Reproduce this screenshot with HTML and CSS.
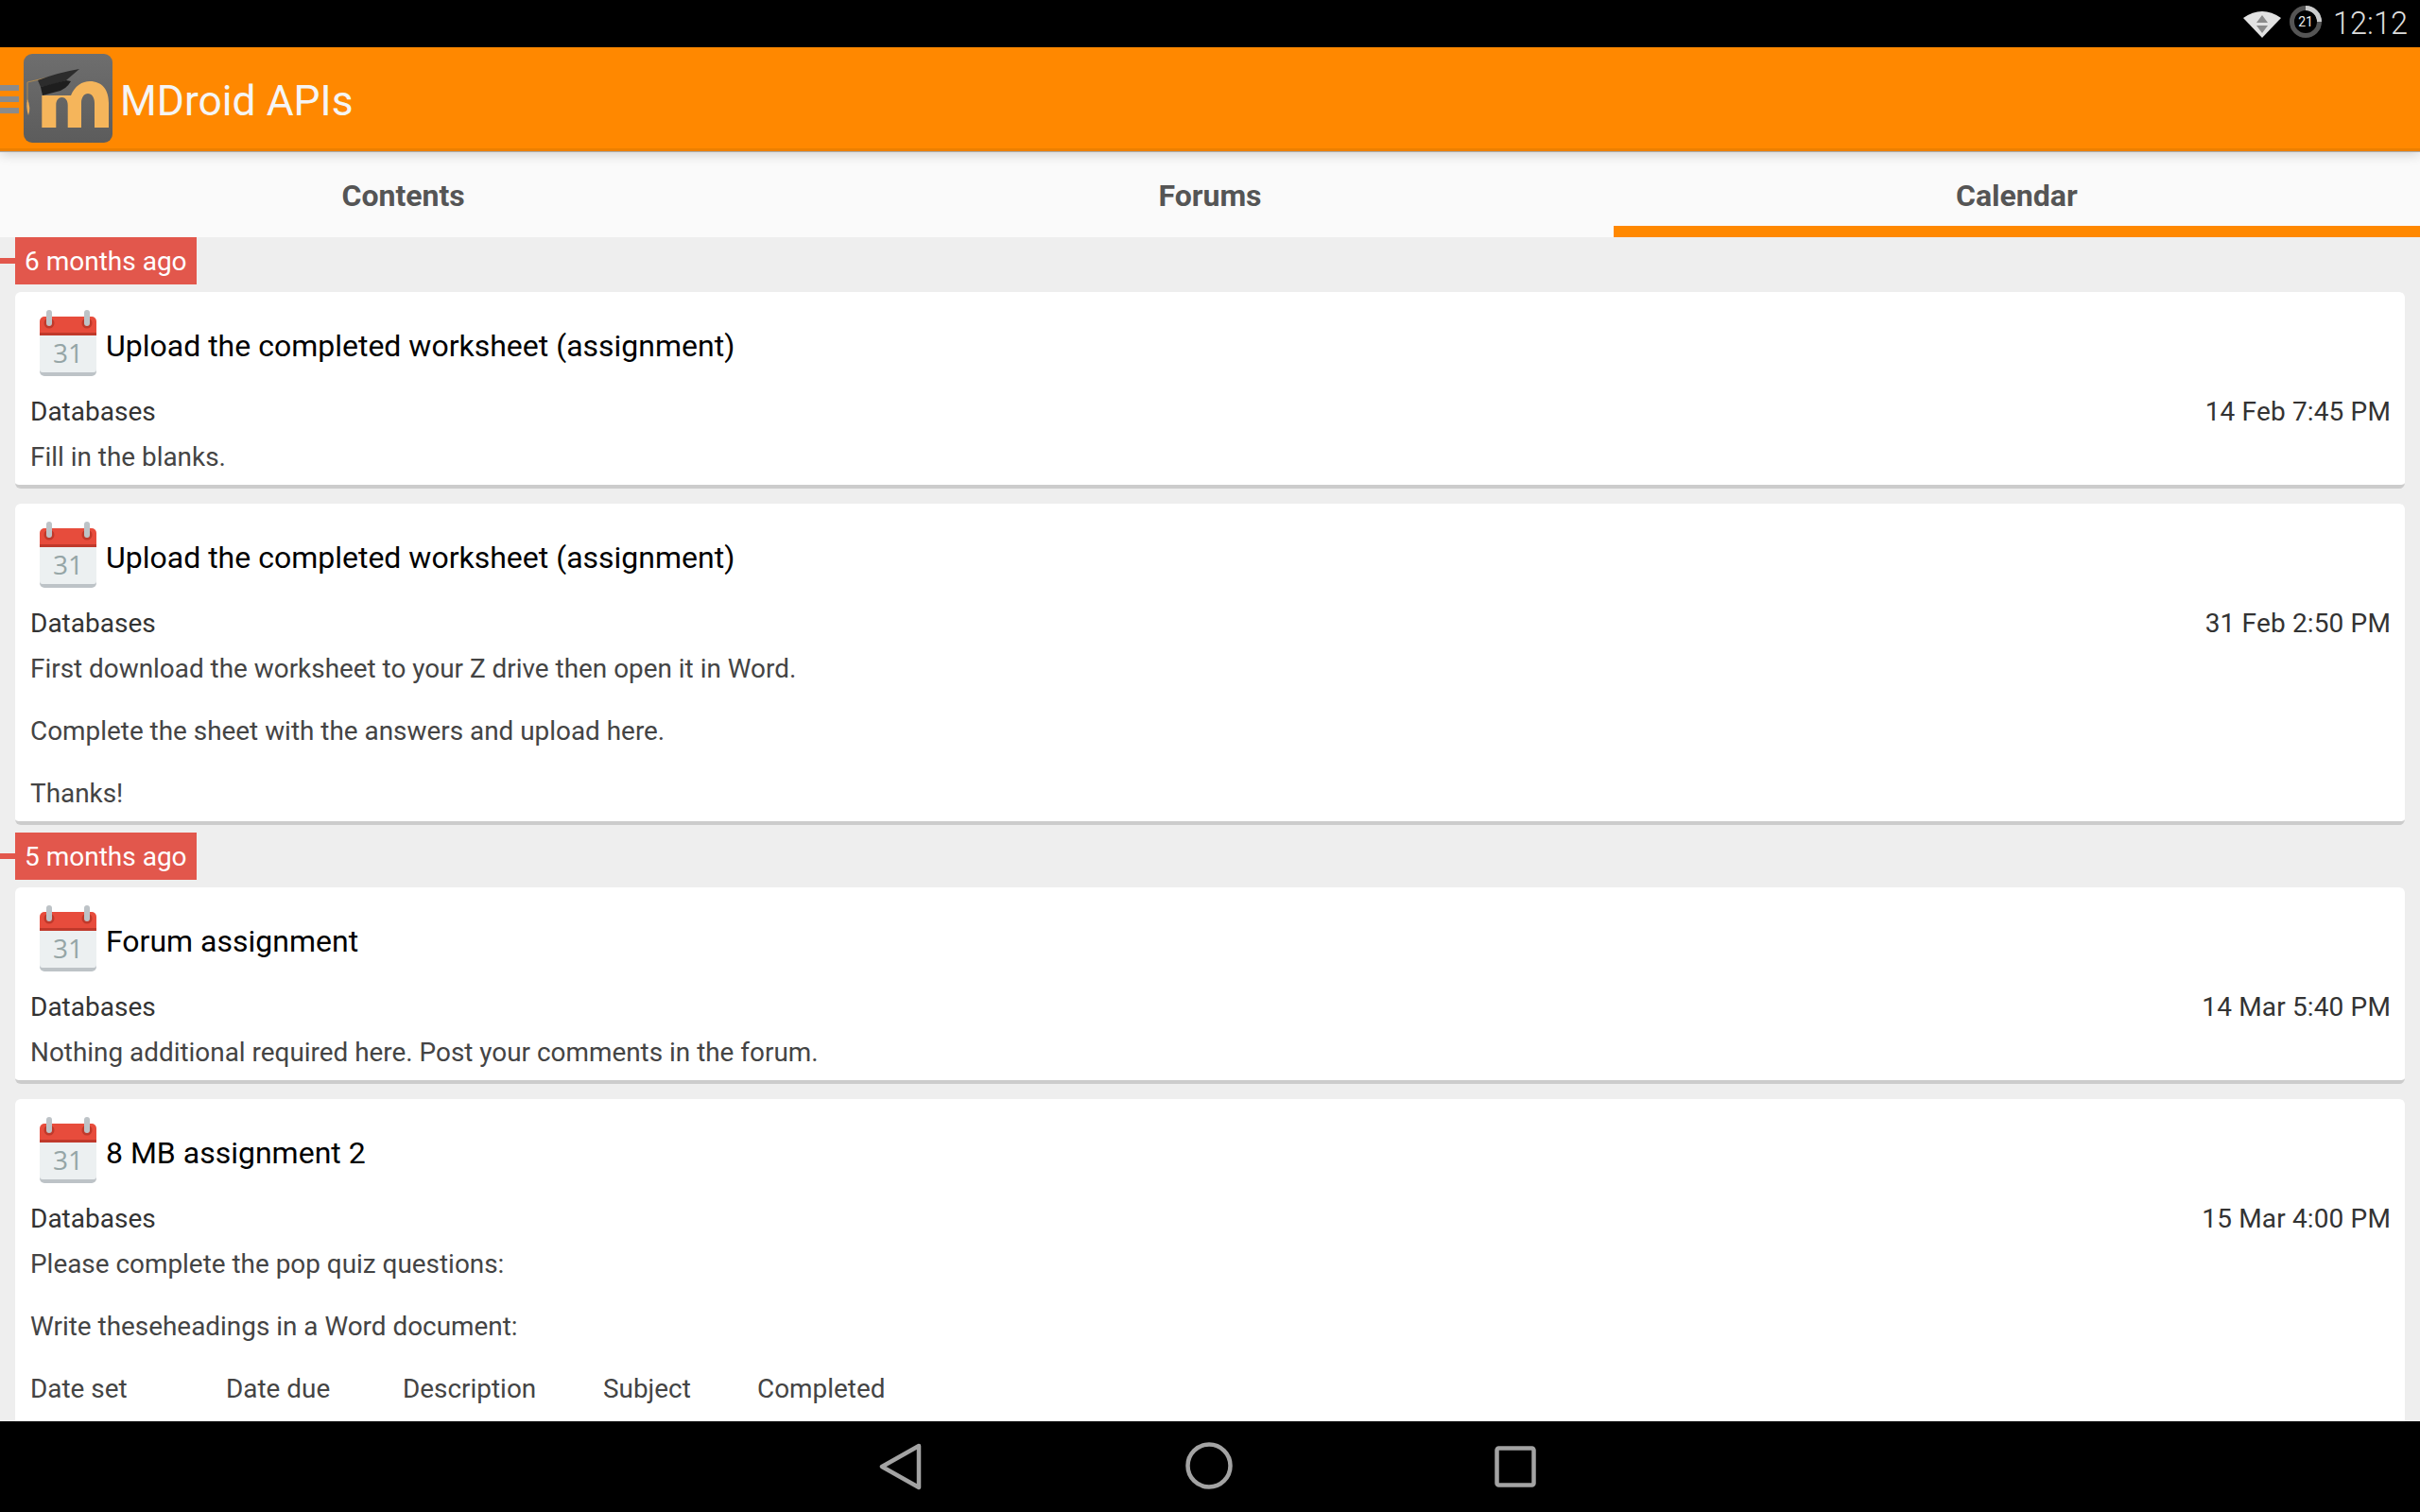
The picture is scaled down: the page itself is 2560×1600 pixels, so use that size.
FILE: index.html
```html
<!DOCTYPE html>
<html lang="en">
<head>
  <meta charset="UTF-8" />
  <meta name="viewport" content="width=device-width, initial-scale=1" />
  <title>MDroid APIs</title>
  <link rel="stylesheet" href="styles.css">
</head>
<body>

  <svg class="defs" width="0" height="0">
    <symbol id="cal" viewBox="0 0 60 70">
      <path d="M0 26V12a5 5 0 0 1 5-5h50a5 5 0 0 1 5 5v14z" fill="#e74c3c"/>
      <rect y="24" width="60" height="3" fill="#c0392b"/>
      <path d="M0 27h60v38a5 5 0 0 1-5 5H5a5 5 0 0 1-5-5z" fill="#bdc3c7"/>
      <path d="M0 27h60v36a3 3 0 0 1-3 3H3a3 3 0 0 1-3-3z" fill="#ecf0f1"/>
      <circle cx="10" cy="14" r="5.5" fill="#c0392b"/>
      <circle cx="50" cy="14" r="5.5" fill="#c0392b"/>
      <rect x="7" width="6" height="17" rx="3" fill="#bdc3c7"/>
      <rect x="47" width="6" height="17" rx="3" fill="#bdc3c7"/>
    </symbol>
  </svg>

  <!-- status bar -->
  <div class="status-bar">
    <svg class="wifi" width="40" height="30" viewBox="0 0 40 30">
      <path d="M0 8Q20-6 40 8L20 29z" fill="#e2e2e2"/>
      <path d="M20 5l6 8H14zM20 24l-6-8h12z" fill="#8a8a8a"/>
    </svg>
    <div class="battery">
      <svg width="34" height="34" viewBox="0 0 34 34">
        <circle cx="17" cy="17" r="14.5" fill="none" stroke="#555" stroke-width="5"/>
        <path d="M17 2.5A14.5 14.5 0 0 1 31.5 17" fill="none" stroke="#ccc" stroke-width="5"/>
      </svg>
      <span class="battery-num">21</span>
    </div>
    <span class="clock">12:12</span>
  </div>

  <!-- action bar -->
  <header class="action-bar">
    <div class="burger"><i></i><i></i><i></i></div>
    <svg class="logo" width="94" height="94" viewBox="0 0 94 94">
      <defs>
        <linearGradient id="logoBg" x1="0" y1="0" x2="0" y2="1">
          <stop offset="0" stop-color="#6e6e6e"/>
          <stop offset="1" stop-color="#5c5c5c"/>
        </linearGradient>
      </defs>
      <rect width="94" height="94" rx="9" fill="url(#logoBg)"/>
      <path d="M19.3 78V44H50C54 34 62 29 70 29C83 29 90 38 90 52V78H75V52C75 46 72 42 68 42C64 42 61 46 61 52V78H46.7V54C46.7 49 44 46 40.5 46C37 46 34.3 49 34.3 54V78z" fill="#f5b55b"/>
      <path d="M4 30L30 24" fill="none" stroke="#b08a50" stroke-width="1"/>
      <path d="M4 30v20" stroke="#b08a50" stroke-width="1"/>
      <path d="M4 48q-2 8 1 17q3-8-1-17z" fill="#e9ac58"/>
      <path d="M15 28Q35 20 59 16L45 28Q30 33 18 35z" fill="#2c2c2c"/>
      <path d="M18 35L45 28L50 29Q45 38 35 40L20 44z" fill="#1e1e1e"/>
    </svg>
    <h1 class="app-title">MDroid APIs</h1>
  </header>

  <!-- tabs -->
  <nav class="tabs">
    <div class="tab">Contents</div>
    <div class="tab">Forums</div>
    <div class="tab active">Calendar</div>
  </nav>

  <main class="feed">

    <section class="group">
      <div class="when"><span class="tick"></span><span class="when-label">6 months ago</span></div>

      <article class="card">
        <div class="card-head">
          <svg class="cal-icon" viewBox="0 0 60 70"><use href="#cal"/><text x="30" y="56" text-anchor="middle" class="cal-day">31</text></svg>
          <span class="card-title">Upload the completed worksheet (assignment)</span>
        </div>
        <div class="card-meta"><span>Databases</span><span class="card-date">14 Feb 7:45 PM</span></div>
        <div class="card-body">
          <p>Fill in the blanks.</p>
        </div>
      </article>

      <article class="card">
        <div class="card-head">
          <svg class="cal-icon" viewBox="0 0 60 70"><use href="#cal"/><text x="30" y="56" text-anchor="middle" class="cal-day">31</text></svg>
          <span class="card-title">Upload the completed worksheet (assignment)</span>
        </div>
        <div class="card-meta"><span>Databases</span><span class="card-date">31 Feb 2:50 PM</span></div>
        <div class="card-body">
          <p>First download the worksheet to your Z drive then open it in Word.</p>
          <p>Complete the sheet with the answers and upload here.</p>
          <p>Thanks!</p>
        </div>
      </article>
    </section>

    <section class="group">
      <div class="when"><span class="tick"></span><span class="when-label">5 months ago</span></div>

      <article class="card">
        <div class="card-head">
          <svg class="cal-icon" viewBox="0 0 60 70"><use href="#cal"/><text x="30" y="56" text-anchor="middle" class="cal-day">31</text></svg>
          <span class="card-title">Forum assignment</span>
        </div>
        <div class="card-meta"><span>Databases</span><span class="card-date">14 Mar 5:40 PM</span></div>
        <div class="card-body">
          <p>Nothing additional required here. Post your comments in the forum.</p>
        </div>
      </article>

      <article class="card">
        <div class="card-head">
          <svg class="cal-icon" viewBox="0 0 60 70"><use href="#cal"/><text x="30" y="56" text-anchor="middle" class="cal-day">31</text></svg>
          <span class="card-title">8 MB assignment 2</span>
        </div>
        <div class="card-meta"><span>Databases</span><span class="card-date">15 Mar 4:00 PM</span></div>
        <div class="card-body">
          <p>Please complete the pop quiz questions:</p>
          <p>Write theseheadings in a Word document:</p>
          <div class="columns">
            <span>Date set</span>
            <span>Date due</span>
            <span>Description</span>
            <span>Subject</span>
            <span>Completed</span>
          </div>
        </div>
      </article>
    </section>

  </main>

  <!-- nav bar -->
  <footer class="nav-bar">
    <svg class="nav-back" width="46" height="52" viewBox="0 0 46 52">
      <path d="M42 4L3 26l39 22z" fill="none" stroke="#a3a3a3" stroke-width="4.5" stroke-linejoin="round"/>
    </svg>
    <svg class="nav-home" width="50" height="50" viewBox="0 0 50 50">
      <circle cx="25" cy="25" r="22.5" fill="none" stroke="#a3a3a3" stroke-width="4.5"/>
    </svg>
    <svg class="nav-recent" width="44" height="44" viewBox="0 0 44 44">
      <rect x="2.5" y="2.5" width="39" height="39" rx="2" fill="none" stroke="#a3a3a3" stroke-width="4.5"/>
    </svg>
  </footer>

</body>
</html>
```

FILE: styles.css
```css
/* Reset and base */
* { box-sizing: border-box; }
body {
  margin: 0;
  width: 2560px;
  height: 1600px;
  overflow: hidden;
  display: flex;
  flex-direction: column;
  background: #eee;
  color: #444;
  font-family: Roboto, 'Liberation Sans', sans-serif;
}
.defs { position: absolute; }
.cal-day {
  font-family: 'Open Sans', Roboto, sans-serif;
  font-size: 28px;
  fill: #95a5a6;
}

/* Status bar */
.status-bar {
  height: 50px;
  flex: none;
  background: #000;
  display: flex;
  align-items: center;
  justify-content: flex-end;
  padding-right: 13px;
}
.wifi { margin-top: 2px; }
.battery {
  position: relative;
  width: 34px;
  height: 34px;
  margin: 0 12px 4px 9px;
}
.battery svg { display: block; }
.battery-num {
  position: absolute;
  inset: 0;
  display: flex;
  align-items: center;
  justify-content: center;
  color: #eee;
  font-size: 14px;
}
.clock {
  color: #ddd;
  font-size: 32.5px;
  font-weight: 300;
}

/* Action bar */
.action-bar {
  height: 110px;
  flex: none;
  position: relative;
  z-index: 2;
  display: flex;
  align-items: center;
  background: #ff8800;
  border-bottom: 3px solid #ec7f00;
  box-shadow: 0 1px 0 #aaa, 0 3px 12px rgba(0, 0, 0, 0.18);
}
.burger {
  width: 20px;
  margin: 3px 5px 0 0;
  display: flex;
  flex-direction: column;
  gap: 6px;
}
.burger i {
  display: block;
  height: 6px;
  background: #8b8b8b;
}
.logo { display: block; margin-top: 1px; }
.app-title {
  margin: 6px 0 0 8px;
  font-size: 44.4px;
  font-weight: 400;
  color: #f5f5f5;
}

/* Tabs */
.tabs {
  height: 91px;
  flex: none;
  display: flex;
  background: #fafafa;
}
.tab {
  flex: 1;
  display: flex;
  align-items: center;
  justify-content: center;
  padding-top: 3px;
  font-size: 32px;
  font-weight: 700;
  color: #555;
}
.tab.active {
  border-bottom: 12px solid #ff8800;
  padding-top: 15px;
}

/* Feed */
.feed {
  flex: 1;
  min-height: 0;
  overflow: hidden;
}
.group + .group { margin-top: 8px; }
.when {
  display: flex;
  align-items: center;
  height: 50px;
}
.tick {
  width: 16px;
  height: 6px;
  background: #e2574c;
}
.when-label {
  height: 50px;
  padding: 0 10px;
  line-height: 52px;
  font-size: 28px;
  color: #fff;
  background: #e2574c;
}
.card {
  margin: 8px 16px 0;
  padding: 19px 16px 13px;
  background: #fff;
  border-radius: 6px;
  border-bottom: 4px solid #ccc;
}
.card + .card { margin-top: 16px; }
.card-head {
  display: flex;
  align-items: center;
  height: 70px;
  padding-left: 10px;
}
.cal-icon {
  width: 60px;
  height: 70px;
  flex: none;
}
.card-title {
  margin: 6px 0 0 10px;
  font-size: 32px;
  color: #000;
}
.card-meta {
  display: flex;
  justify-content: space-between;
  margin-top: 22px;
  line-height: 32px;
  font-size: 28px;
  color: #333;
}
.card-date {
  margin-right: -1px;
  letter-spacing: 0.15px;
}
.card-body {
  margin-top: 16px;
  font-size: 27.9px;
  line-height: 32px;
  color: #444;
}
.card-body p { margin: 0 0 34px; }
.card-body p:last-child { margin-bottom: 0; }
.columns {
  display: grid;
  grid-template-columns: 207px 187px 212px 163px auto;
  margin-bottom: 40px;
}

/* Nav bar */
.nav-bar {
  height: 96px;
  flex: none;
  position: relative;
  z-index: 2;
  background: #000;
}
.nav-bar svg { position: absolute; }
.nav-back { left: 930px; top: 22px; }
.nav-home { left: 1254px; top: 22px; }
.nav-recent { left: 1581px; top: 26px; }
```
